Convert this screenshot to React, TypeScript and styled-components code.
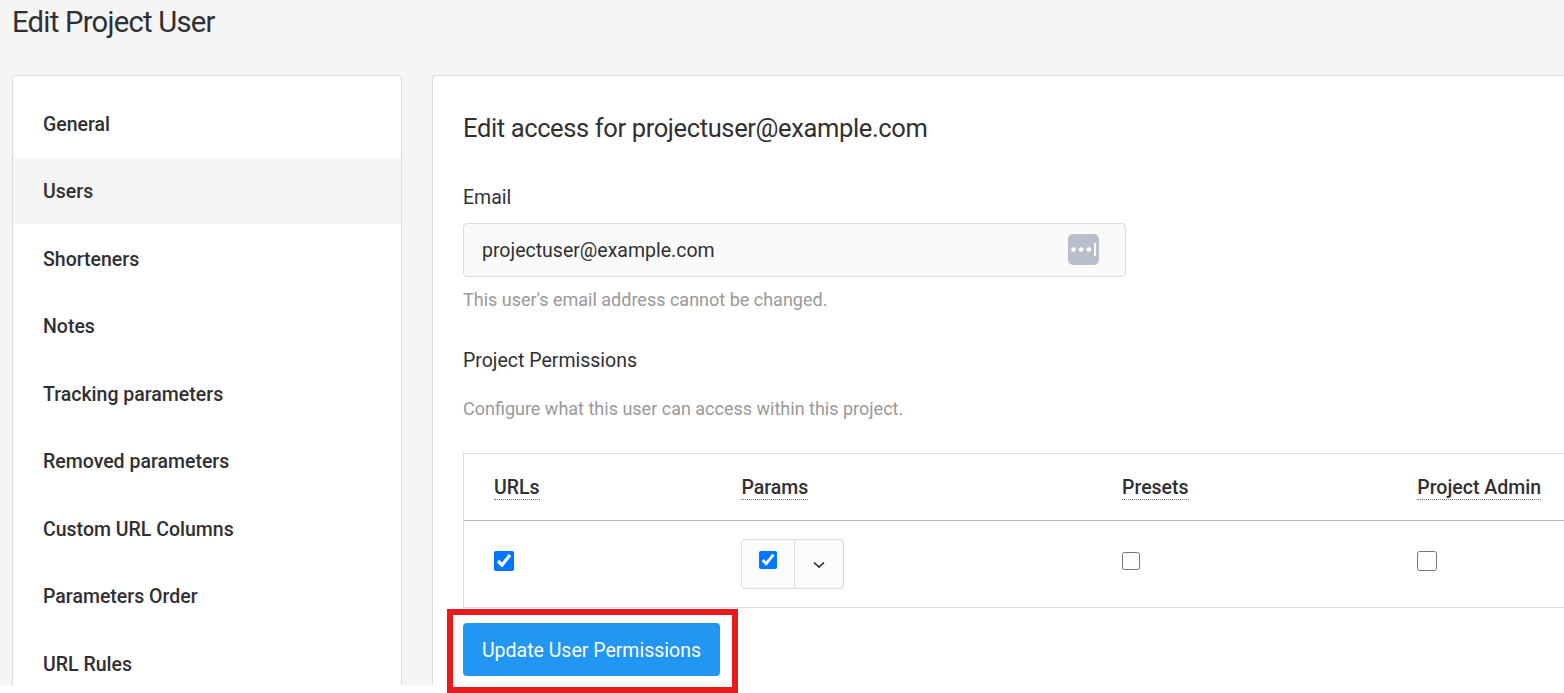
import React, { useState } from 'react';
import styled, { createGlobalStyle, css } from 'styled-components';

const GlobalStyle = createGlobalStyle`
  * {
    box-sizing: border-box;
  }

  body {
    margin: 0;
    min-height: 100vh;
    overflow: hidden;
    background: #fff;
    color: #303033;
    font-family: Roboto, 'Liberation Sans', sans-serif;
    font-size: 19.5px;
  }
`;

const Page = styled.div`
  display: flex;
  flex-direction: column;
  height: 685.4px;
  padding-left: 12px;
  background: #f5f5f5;
`;

const PageTitle = styled.h1`
  margin: 0;
  height: 75px;
  padding-top: 2px;
  font-size: 29.25px;
  font-weight: 400;
  letter-spacing: -0.76px;
  line-height: 40px;
`;

const Columns = styled.div`
  display: flex;
  flex: 1;
  min-height: 0;
  gap: 30px;
`;

const Sidebar = styled.nav`
  display: flex;
  flex-direction: column;
  flex-shrink: 0;
  gap: 1.5px;
  width: 390px;
  padding-top: 14px;
  background: #fff;
  border: 1px solid #dbdbdb;
  border-bottom: 0;
  border-radius: 4px 4px 0 0;
`;

const NavItem = styled.a<{ $active: boolean }>`
  flex-shrink: 0;
  height: 66px;
  padding: 0.5px 0 0 30px;
  font-weight: 500;
  line-height: 68px;
  cursor: pointer;

  ${(props) =>
    props.$active &&
    css`
      background: #f5f5f5;
    `}
`;

const Panel = styled.main`
  flex: 1;
  min-width: 0;
  padding: 32px 0 0 30px;
  background: #fff;
  border: 1px solid #dbdbdb;
  border-width: 1px 0 0 1px;
  border-radius: 4px 0 0 0;
`;

const PanelTitle = styled.h2`
  margin: 0 0 40px;
  font-size: 25.5px;
  font-weight: 400;
  letter-spacing: -0.37px;
  line-height: 40px;
`;

const Label = styled.div`
  line-height: 20px;
`;

const EmailField = styled.div`
  display: flex;
  align-items: center;
  justify-content: space-between;
  width: 663px;
  height: 54px;
  margin-top: 15px;
  padding: 0 26px 0 18px;
  background: #fafafa;
  border: 1px solid #dbdbdb;
  border-radius: 4px;

  svg {
    margin-bottom: 2px;
  }
`;

const Hint = styled.p`
  margin: 0;
  color: #999;
  font-size: 18px;
  line-height: 20px;
`;

const EmailHint = styled(Hint)`
  margin: 13px 0 41px;
`;

const PermissionsHint = styled(Hint)`
  margin: 28px 0 34px;
`;

const Table = styled.div`
  border: 1px solid #dbdbdb;
  border-right: 0;
`;

const Row = styled.div<{ $height: number }>`
  display: grid;
  grid-template-columns: 247.4px 380.6px 295.3px 1fr;
  align-items: center;
  height: ${(props) => props.$height}px;
  padding-left: 30px;
`;

const HeaderRow = styled(Row)`
  border-bottom: 1px solid #b6b6b6;
`;

const HeaderLabel = styled.span`
  justify-self: start;
  padding-top: 2px;
  border-bottom: 1px dotted #777;
  font-weight: 500;
  line-height: 22px;
  white-space: nowrap;
`;

const Checkbox = styled.input.attrs({ type: 'checkbox' })<{ $size: number }>`
  display: block;
  width: ${(props) => props.$size}px;
  height: ${(props) => props.$size}px;
  margin: 0 0 6px;
`;

const SplitButton = styled.div`
  display: flex;
  width: 103px;
  height: 50px;
  background: #fcfcfc;
  border: 1px solid #dbdbdb;
  border-radius: 4px;
`;

const SplitCheck = styled.div`
  width: 53px;
  padding: 11px 0 0 17px;
  border-right: 1px solid #dbdbdb;
`;

const SplitToggle = styled.div`
  display: flex;
  flex: 1;
  align-items: center;
  justify-content: center;
  padding-top: 1px;
`;

const ButtonArea = styled.div`
  position: relative;
  width: 257px;
  margin-top: 15px;
`;

const SubmitButton = styled.button`
  display: block;
  width: 100%;
  height: 53px;
  padding: 1px 0 0;
  background: #2196f3;
  border: 0;
  border-radius: 4px;
  color: #fff;
  font: inherit;
`;

const Highlight = styled.div`
  position: absolute;
  top: -14px;
  left: -16px;
  width: 291px;
  height: 84px;
  border: 6px solid #e81a1c;
  pointer-events: none;
`;

const navItems = [
  'General',
  'Users',
  'Shorteners',
  'Notes',
  'Tracking parameters',
  'Removed parameters',
  'Custom URL Columns',
  'Parameters Order',
  'URL Rules',
];

const columns = ['URLs', 'Params', 'Presets', 'Project Admin'];

const PasswordIcon = () => (
  <svg width='31' height='31' viewBox='0 0 31 31'>
    <rect width='31' height='31' rx='5' fill='#b9bfca' />
    <circle cx='5.5' cy='15.5' r='2.3' fill='#fff' />
    <circle cx='13.2' cy='15.5' r='2.3' fill='#fff' />
    <circle cx='20.9' cy='15.5' r='2.3' fill='#fff' />
    <rect x='26' y='9' width='2' height='13' fill='#fff' />
  </svg>
);

const ChevronIcon = () => (
  <svg width='12' height='8' viewBox='0 0 12 8' fill='none' stroke='#303033' strokeWidth='1.7'>
    <path d='M1 1.5 L6 6.2 L11 1.5' />
  </svg>
);

export default function App() {
  const [access, setAccess] = useState({ urls: true, params: true, presets: false, admin: false });
  const toggle = (key: keyof typeof access) => () => setAccess({ ...access, [key]: !access[key] });

  return (
    <Page>
      <GlobalStyle />
      <PageTitle>Edit Project User</PageTitle>
      <Columns>
        <Sidebar>
          {navItems.map((item) => (
            <NavItem key={item} $active={item === 'Users'}>
              {item}
            </NavItem>
          ))}
        </Sidebar>
        <Panel>
          <PanelTitle>Edit access for projectuser@example.com</PanelTitle>
          <Label>Email</Label>
          <EmailField>
            <span>projectuser@example.com</span>
            <PasswordIcon />
          </EmailField>
          <EmailHint>This user's email address cannot be changed.</EmailHint>
          <Label>Project Permissions</Label>
          <PermissionsHint>Configure what this user can access within this project.</PermissionsHint>
          <Table>
            <HeaderRow $height={67}>
              {columns.map((column) => (
                <HeaderLabel key={column}>{column}</HeaderLabel>
              ))}
            </HeaderRow>
            <Row $height={86}>
              <Checkbox $size={20} checked={access.urls} onChange={toggle('urls')} />
              <SplitButton>
                <SplitCheck>
                  <Checkbox $size={18} checked={access.params} onChange={toggle('params')} />
                </SplitCheck>
                <SplitToggle>
                  <ChevronIcon />
                </SplitToggle>
              </SplitButton>
              <Checkbox $size={18} checked={access.presets} onChange={toggle('presets')} />
              <Checkbox $size={20} checked={access.admin} onChange={toggle('admin')} />
            </Row>
          </Table>
          <ButtonArea>
            <SubmitButton>Update User Permissions</SubmitButton>
            <Highlight />
          </ButtonArea>
        </Panel>
      </Columns>
    </Page>
  );
}
